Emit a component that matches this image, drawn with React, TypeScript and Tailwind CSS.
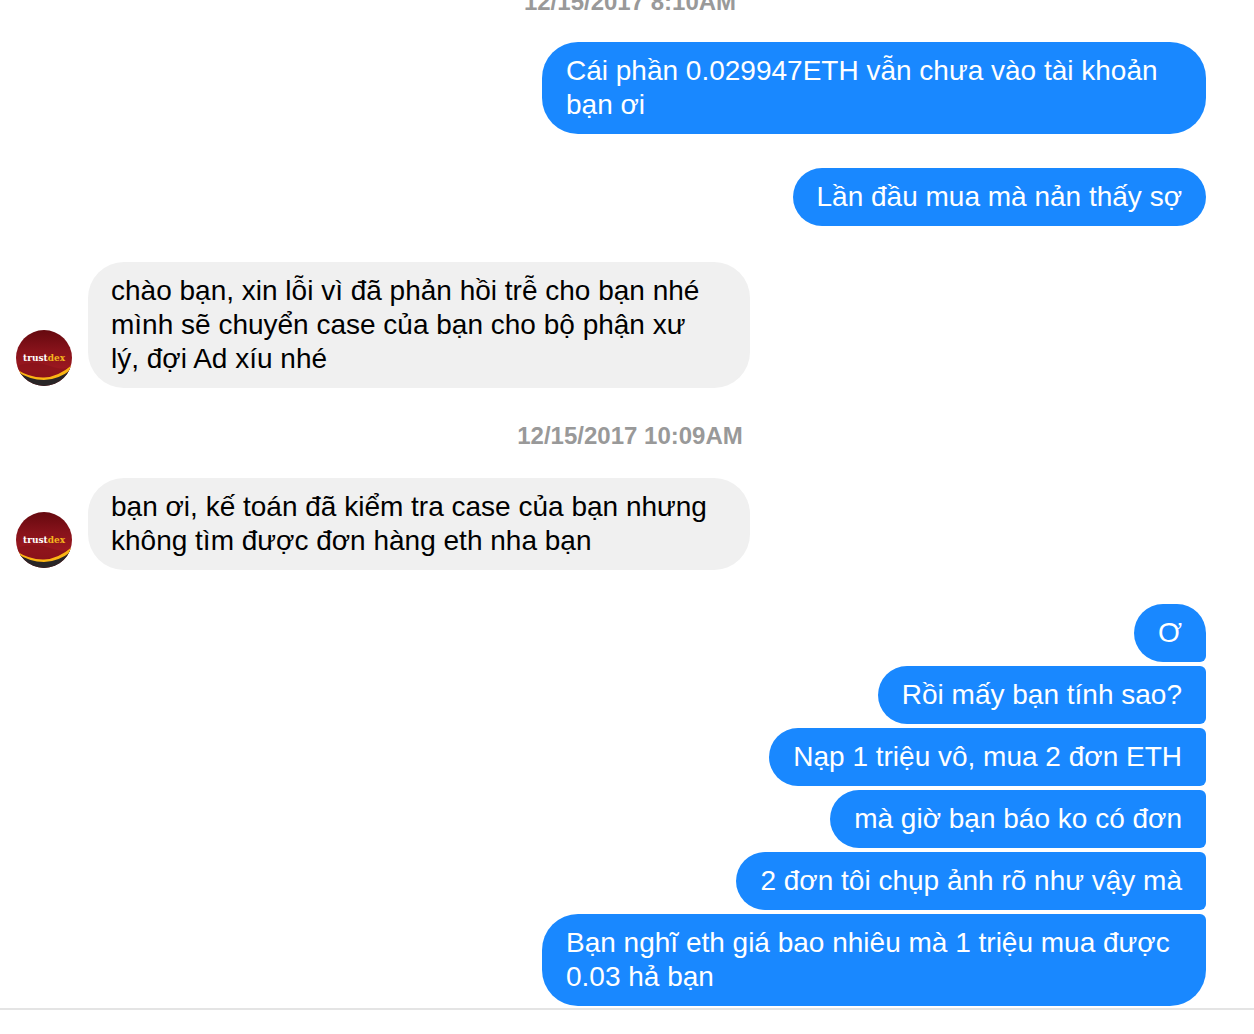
import React from "react";

type Tail = "none" | "bottom" | "both" | "top";

const corners: Record<Tail, string> = {
  none: "",
  bottom: "rounded-br-[6px]",
  both: "rounded-r-[6px]",
  top: "rounded-tr-[6px]",
};

function Sent({ text, tail = "none" }: { text: string; tail?: Tail }) {
  const wide = text.length > 35;
  return (
    <p
      className={`max-w-[664px] bg-[#1988ff] px-6 py-3 text-white ${
        wide ? "rounded-[36px]" : "rounded-[29px]"
      } ${corners[tail]}`}
    >
      {text}
    </p>
  );
}

function Avatar({ id }: { id: string }) {
  return (
    <svg className="mb-0.5 size-14 shrink-0" viewBox="0 0 56 56" role="img" aria-label="trustdex">
      <defs>
        <linearGradient id={`${id}-red`} x1="0" y1="0" x2="0" y2="1">
          <stop offset="0" stopColor="#65090f" />
          <stop offset="0.35" stopColor="#86121a" />
          <stop offset="0.7" stopColor="#9c1820" />
          <stop offset="1" stopColor="#8a131a" />
        </linearGradient>
        <clipPath id={`${id}-disc`}>
          <circle cx="28" cy="28" r="28" />
        </clipPath>
      </defs>
      <g clipPath={`url(#${id}-disc)`}>
        <rect width="56" height="56" fill={`url(#${id}-red)`} />
        <path d="M0 36Q18 30 34 36T56 35V40Q28 56 0 39Z" fill="#7f1017" opacity="0.45" />
        <path d="M0 40Q14 49 28 49T56 37V56H0Z" fill="#292627" />
        <path d="M0 39Q14 48 28 47.500T56 35V39Q42 50 28 50T0 41Z" fill="#fbb514" />
      </g>
      <text x="7" y="31" fontSize="10" fontWeight="700" fontFamily="DejaVu Serif Condensed, DejaVu Serif, serif" fill="#fff">
        trust<tspan fill="#f5b51e">dex</tspan>
      </text>
    </svg>
  );
}

function Received({ id, children }: { id: string; children: React.ReactNode }) {
  return (
    <div className="flex items-end gap-4 pl-4">
      <Avatar id={id} />
      <p className="w-[662px] rounded-[36px] bg-[#f0f0f0] py-3 pr-6 pl-[23px] text-black">{children}</p>
    </div>
  );
}

export default function App() {
  return (
    <main className="overflow-hidden bg-white font-['Liberation_Sans',Arial,sans-serif] text-[28px] leading-[34px]">
      <section className="border-b-2 border-[#e4e4e4] pb-0.5">
        <time className="-mt-3 block pl-1.5 text-center text-2xl leading-7 font-bold text-[#999999]">12/15/2017 8:10AM</time>
        <div className="mt-[26px] flex flex-col items-end gap-[34px] pr-12">
          <Sent text="Cái phần 0.029947ETH vẫn chưa vào tài khoản bạn ơi" />
          <Sent text="Lần đầu mua mà nản thấy sợ" />
        </div>
        <div className="mt-9">
          <Received id="first">
            chào bạn, xin lỗi vì đã phản hồi trễ cho bạn nhé
            <br />
            mình sẽ chuyển case của bạn cho bộ phận xư
            <br />
            lý, đợi Ad xíu nhé
          </Received>
        </div>
        <time className="mt-[34px] mb-7 block pl-1.5 text-center text-2xl leading-7 font-bold text-[#999999]">12/15/2017 10:09AM</time>
        <Received id="second">
          bạn ơi, kế toán đã kiểm tra case của bạn nhưng
          <br />
          không tìm được đơn hàng eth nha bạn
        </Received>
        <div className="mt-[34px] flex flex-col items-end gap-1 pr-12">
          <Sent text="Ơ" tail="bottom" />
          <Sent text="Rồi mấy bạn tính sao?" tail="both" />
          <Sent text="Nạp 1 triệu vô, mua 2 đơn ETH" tail="both" />
          <Sent text="mà giờ bạn báo ko có đơn" tail="both" />
          <Sent text="2 đơn tôi chụp ảnh rõ như vậy mà" tail="both" />
          <Sent text="Bạn nghĩ eth giá bao nhiêu mà 1 triệu mua được 0.03 hả bạn" tail="top" />
        </div>
      </section>
    </main>
  );
}
